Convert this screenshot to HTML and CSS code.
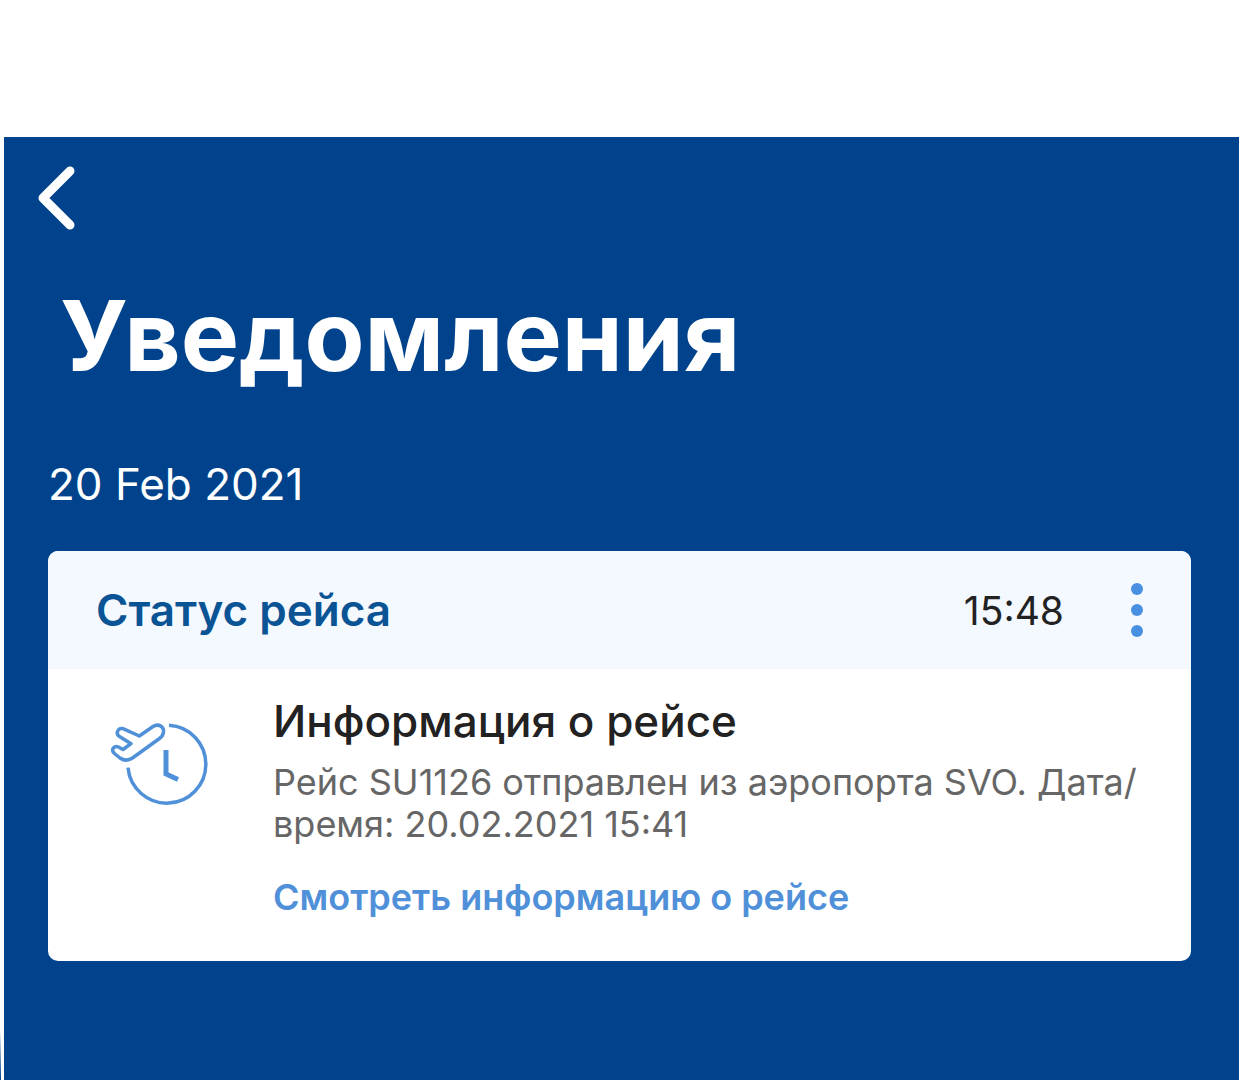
FILE: index.html
```html
<!DOCTYPE html>
<html lang="ru">
<head>
    <meta charset="UTF-8">
    <meta name="viewport" content="width=device-width, initial-scale=1.0">
    <title>Уведомления</title>
    <link rel="stylesheet" href="styles.css">
</head>
<body>
    <div class="screen">
        <header>
            <button type="button" class="btn-back" aria-label="Назад">
                <svg width="40" height="64" viewBox="0 0 40 64">
                    <path d="M34 5 L7 32 L34 59" fill="none" stroke="currentColor" stroke-width="9" stroke-linecap="round" stroke-linejoin="round"/>
                </svg>
            </button>
            <h1>Уведомления</h1>
        </header>
        <main>
            <h2 class="date">20 Feb 2021</h2>
            <article class="card">
                <div class="card-header">
                    <h3>Статус рейса</h3>
                    <time datetime="2021-02-20T15:48">15:48</time>
                    <button type="button" class="btn-menu" aria-label="Меню">
                        <svg width="14" height="56" viewBox="0 0 14 56">
                            <circle cx="7" cy="7" r="6"/>
                            <circle cx="7" cy="28" r="6"/>
                            <circle cx="7" cy="49" r="6"/>
                        </svg>
                    </button>
                </div>
                <div class="card-body">
                    <!-- plane and clock -->
                    <svg class="flight-icon" width="100" height="84" viewBox="0 0 100 84">
                        <path class="line" d="M59 3.2 A39 39 0 1 1 18 45.7"/>
                        <path class="line" d="M29.3 14 L43 4.5 C49 1 54 5 53.5 10 Q53 14 49.5 16.5 L22.5 36 C18 39 13.5 38.5 10 36 L5 32 C0 28 4 23 8.5 25 L13 27.5 L21 21.7 L9.5 14.5 C5 11.5 8 5.5 13.5 6.8 Z"/>
                        <path class="hands" d="M56 28 V52 L68 57.5"/>
                    </svg>
                    <div class="info">
                        <h4>Информация о рейсе</h4>
                        <p>Рейс SU1126 отправлен из аэропорта SVO. Дата/<wbr>время: 20.02.2021 15:41</p>
                        <a href="#">Смотреть информацию о рейсе</a>
                    </div>
                </div>
            </article>
        </main>
    </div>
</body>
</html>
```
FILE: styles.css
```css
* {
    box-sizing: border-box;
}
body {
    margin: 0;
    padding: 137px 0 0 4px;
    min-height: 100vh;
    display: flex;
    /* thin blue edge that fades in at the bottom left */
    background: white linear-gradient(to top, #00438c, white) left bottom / 1px 50px no-repeat;
    font-family: Inter, "Noto Sans", sans-serif;
}
.screen {
    flex: 1;
    background-color: #00438c;
    color: white;
}
h1, h2, h3, h4, p {
    margin: 0;
}
button {
    padding: 0;
    border: none;
    background: none;
    cursor: pointer;
}
header {
    padding: 29px 32px 0;
}
.btn-back {
    display: block;
    color: white;
}
svg {
    display: block;
}
h1 {
    margin: 46px 0 0 24px;
    font-size: 98px;
    line-height: 120px;
    font-weight: 700;
}
main {
    padding: 60px 48px 48px 44px;
}
.date {
    font-size: 44px;
    line-height: 56px;
    font-weight: 400;
}
.card {
    margin-top: 39px;
    border-radius: 10px;
    overflow: hidden;
    background-color: white;
}
.card-header {
    display: flex;
    align-items: center;
    padding: 31px 47px 31px 48px;
    background-color: #f4f8ff;
}
.card-header h3 {
    flex: 1;
    color: #0a5394;
    font-size: 44px;
    line-height: 56px;
    font-weight: 600;
}
.card-header time {
    color: #222;
    font-size: 39px;
}
.btn-menu {
    margin-left: 66px;
}
.btn-menu svg {
    fill: #4a90e2;
}
.card-body {
    display: flex;
    padding: 24px 48px 42px 62px;
}
.flight-icon {
    flex: none;
    margin: 29px 63px 0 0;
    fill: none;
    stroke: #4f90d9;
}
.flight-icon .line {
    stroke-width: 3.5;
    stroke-linejoin: round;
}
.flight-icon .hands {
    stroke-width: 5;
}
.info h4 {
    color: #222;
    font-size: 44px;
    line-height: 56px;
    font-weight: 500;
}
.info p {
    margin-top: 12px;
    color: #666;
    font-size: 36px;
    line-height: 42px;
}
.info a {
    display: inline-block;
    margin-top: 30px;
    color: #4f90d9;
    font-size: 36px;
    line-height: 44px;
    font-weight: 600;
    text-decoration: none;
}
```
